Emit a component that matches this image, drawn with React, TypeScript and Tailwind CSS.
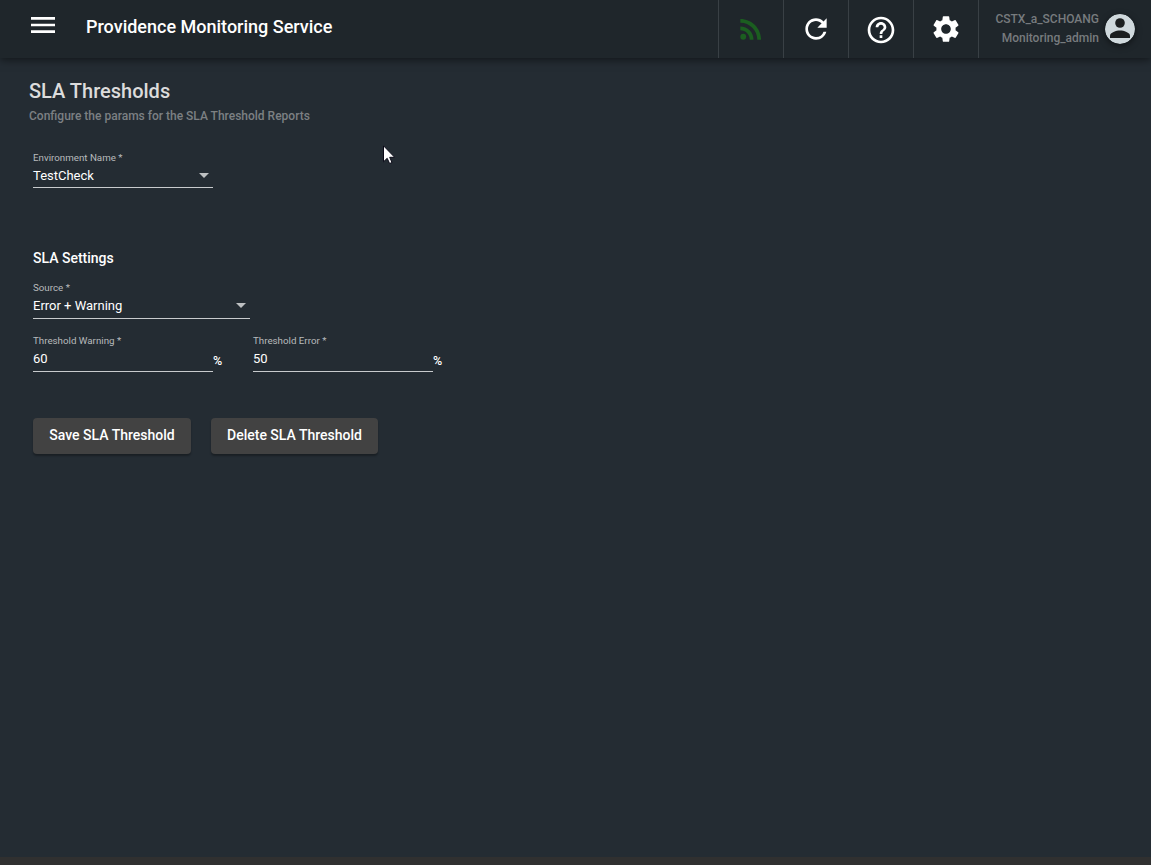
import type { ReactNode } from 'react';
import { MdMenu, MdRssFeed, MdRefresh, MdHelpOutline, MdSettings, MdArrowDropDown } from 'react-icons/md';

function ToolbarButton({ label, children }: { label: string; children: ReactNode }) {
  return (
    <button aria-label={label} className="flex h-[58px] w-[65px] items-center justify-center border-l border-[#394045] text-white">
      {children}
    </button>
  );
}

function Avatar() {
  return (
    <svg viewBox="0 0 30 30" className="size-[30px] rounded-full shadow-[0_2px_6px_rgba(0,0,0,0.5)]">
      <circle cx="15" cy="15" r="15" fill="#cfd8dc" />
      <circle cx="15" cy="9" r="4.8" fill="#1c1f20" />
      <path d="M5 24v-2.2c0-3.3 6.2-5.3 10-5.3s10 2 10 5.3V24z" fill="#1c1f20" />
    </svg>
  );
}

function SelectField({ label, value, className }: { label: string; value: string; className: string }) {
  return (
    <div className={`border-b border-[#c8cbcd] ${className}`}>
      <div className="pt-px text-[9.75px] leading-3 text-[#b8bbbd]">{label}</div>
      <div className="mt-px flex h-[22px] items-center justify-between text-[13px] leading-[22px] text-white">
        <span>{value}</span>
        <MdArrowDropDown className="-mt-[2px] -mr-[3px] size-6 text-[#bdc0c2]" />
      </div>
    </div>
  );
}

function PercentField({ label, value }: { label: string; value: string }) {
  return (
    <div className="flex w-[220px]">
      <div className="h-[38px] w-[180px] border-b border-[#c8cbcd]">
        <div className="pt-px text-[9.75px] leading-3 text-[#b8bbbd]">{label}</div>
        <div className="mt-px text-[13px] leading-[22px] text-white">{value}</div>
      </div>
      <span className="mt-[19px] text-[12.5px] leading-4 font-medium text-white">%</span>
    </div>
  );
}

function ActionButton({ children, className }: { children: ReactNode; className: string }) {
  return (
    <button className={`h-9 rounded-[4px] bg-[#424242] pb-[2px] text-sm font-medium whitespace-nowrap text-white shadow-[0_2px_2px_rgba(0,0,0,0.3)] ${className}`}>
      {children}
    </button>
  );
}

export default function App() {
  return (
    <div className="relative flex h-[865px] w-full flex-col overflow-hidden bg-[#303030] font-['Roboto',sans-serif]">
      <header className="z-10 flex h-[58px] shrink-0 bg-[#1f262b] shadow-[0_2px_8px_rgba(0,0,0,0.5)]">
        <button aria-label="Menu" className="mt-[9px] ml-[27px] size-8 text-white">
          <MdMenu className="size-8" />
        </button>
        <h1 className="mt-[14px] ml-[27px] text-[18px] leading-[26px] font-medium text-white">Providence Monitoring Service</h1>
        <div className="ml-auto flex">
          <ToolbarButton label="Feed"><MdRssFeed className="size-8 text-[#1b5e20]" /></ToolbarButton>
          <ToolbarButton label="Refresh"><MdRefresh className="size-8" /></ToolbarButton>
          <ToolbarButton label="Help"><MdHelpOutline className="mt-[2px] size-8" /></ToolbarButton>
          <ToolbarButton label="Settings"><MdSettings className="size-8" /></ToolbarButton>
          <div className="flex h-[58px] w-[173px] items-center justify-end gap-[6px] border-l border-[#394045] pr-4">
            <div className="text-right text-xs leading-[19px] font-medium text-[#777b7e]">
              <div>CSTX_a_SCHOANG</div>
              <div>Monitoring_admin</div>
            </div>
            <Avatar />
          </div>
        </div>
      </header>

      <main className="h-[799px] shrink-0 bg-[#242c33] pt-[20px] pl-[29px]">
        <h2 className="text-[20px] leading-[26px] font-medium text-[#dcdcdc]">SLA Thresholds</h2>
        <p className="mt-[3px] text-xs leading-[18px] font-medium text-[#7c8083]">Configure the params for the SLA Threshold Reports</p>

        <div className="pt-[26px] pl-1">
          <SelectField label="Environment Name *" value="TestCheck" className="h-[37px] w-[180px]" />

          <h3 className="mt-[60px] text-sm leading-5 font-medium text-white">SLA Settings</h3>
          <SelectField label="Source *" value="Error + Warning" className="mt-[13px] h-[38px] w-[217px]" />

          <div className="mt-[15px] flex">
            <PercentField label="Threshold Warning *" value="60" />
            <PercentField label="Threshold Error *" value="50" />
          </div>

          <div className="mt-[46px] flex gap-5">
            <ActionButton className="w-[158px]">Save SLA Threshold</ActionButton>
            <ActionButton className="w-[167px]">Delete SLA Threshold</ActionButton>
          </div>
        </div>
      </main>

      <svg viewBox="0 0 12 19" className="absolute top-[145px] left-[383px] z-20 h-[19px] w-3">
        <path d="M.5.8v16l3.7-3.5 2.4 5.2 2.4-1-2.3-5.2h5z" fill="#fff" stroke="#0b0b18" strokeWidth="1" />
      </svg>
    </div>
  );
}
